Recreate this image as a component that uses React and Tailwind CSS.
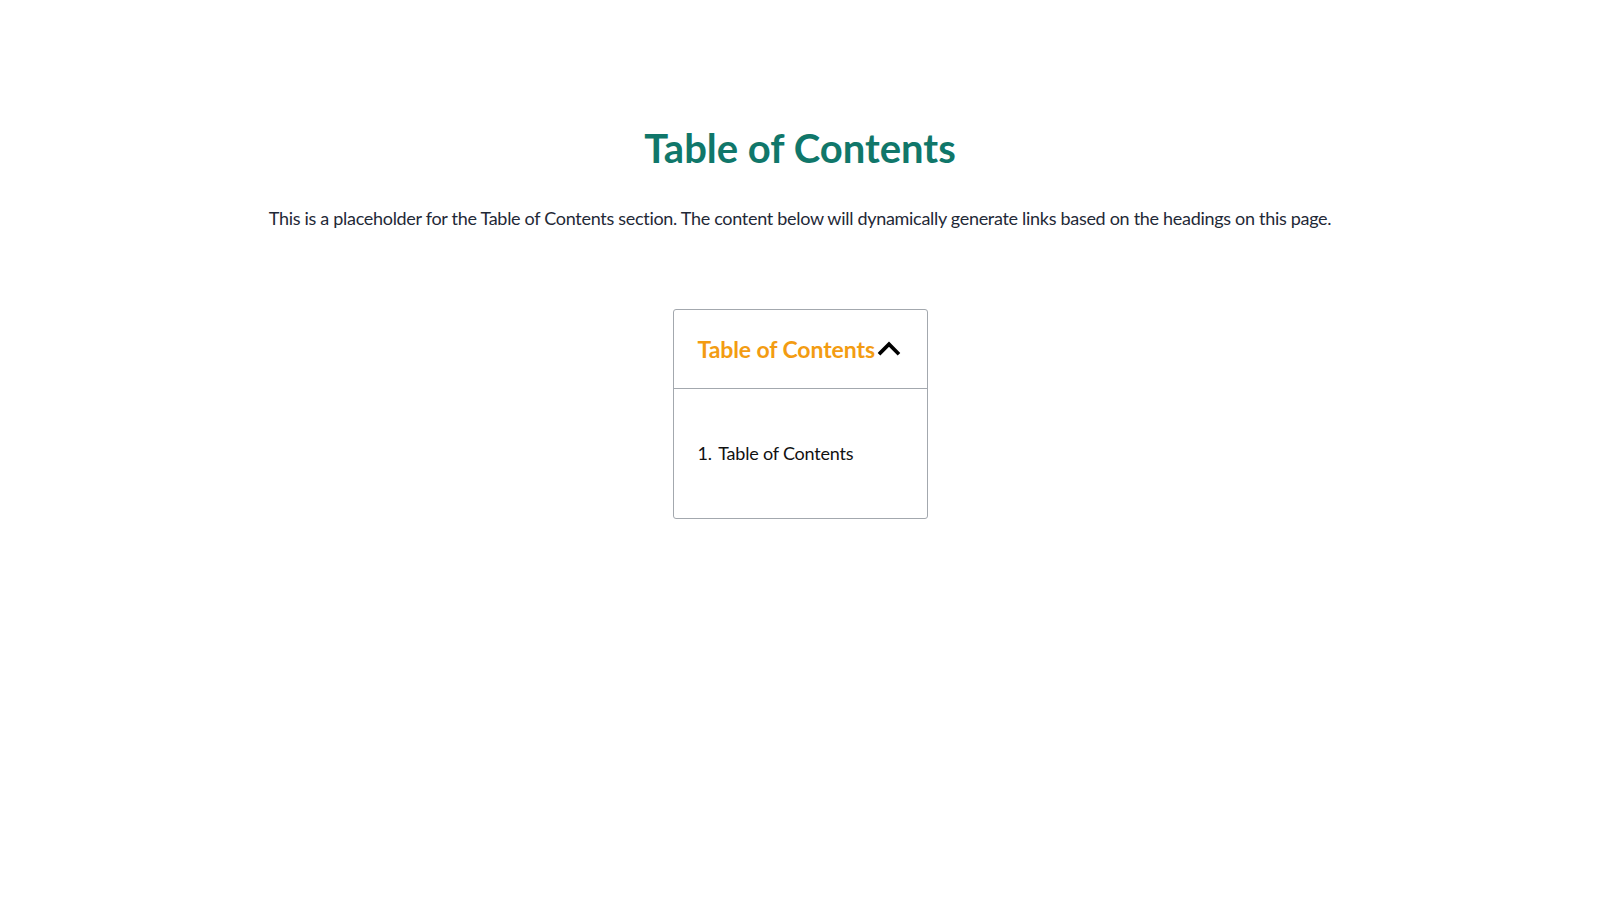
import React, { useState } from 'react';

function TocBox() {
  const [open, setOpen] = useState(true);
  const items = ['Table of Contents'];

  return (
    <div className="w-[255px] mx-auto border border-[#a3a8ae] rounded-[3px]">
      <button
        type="button"
        onClick={() => setOpen(!open)}
        className="w-full flex items-center text-left px-[24px] py-[23px] border-b border-[#a3a8ae] cursor-pointer"
      >
        <span className="whitespace-nowrap text-[23px] leading-8 font-bold text-[#f39c12] tracking-[-0.1px]">Table of Contents</span>
        <svg
          className="w-[26px] h-[26px] ml-[1px] -mt-[2px] shrink-0"
          viewBox="0 0 24 24"
          fill="none"
          stroke="#000"
          strokeWidth="3.4"
          strokeLinecap="square"
          strokeLinejoin="miter"
        >
          <path d="M4 16.5L12 8.5L20 16.5" />
        </svg>
      </button>
      {open && (
        <div className="px-[24px] pt-[50px] pb-[51px]">
          <ol className="list-decimal list-inside text-[18px] leading-7 text-[#111] tracking-[-0.2px]">
            {items.map((item) => (
              <li key={item}>
                <a href="#toc" className="ml-[2px]">{item}</a>
              </li>
            ))}
          </ol>
        </div>
      )}
    </div>
  );
}

export default function App() {
  return (
    <div className="min-h-screen bg-white font-['Lato',sans-serif] text-[#1f2937]">
      <section id="toc" className="pt-[124px] px-8 text-center">
        <h1 className="text-[40px] leading-[48px] font-bold text-[#10776a]">Table of Contents</h1>
        <p className="mt-[32px] text-[18px] leading-7 text-[#1f2937] tracking-[-0.3px]">
          This is a placeholder for the Table of Contents section. The content below will dynamically generate links based on the headings on this page.
        </p>
      </section>
      <div className="mt-[77px] text-left">
        <TocBox />
      </div>
    </div>
  );
}
